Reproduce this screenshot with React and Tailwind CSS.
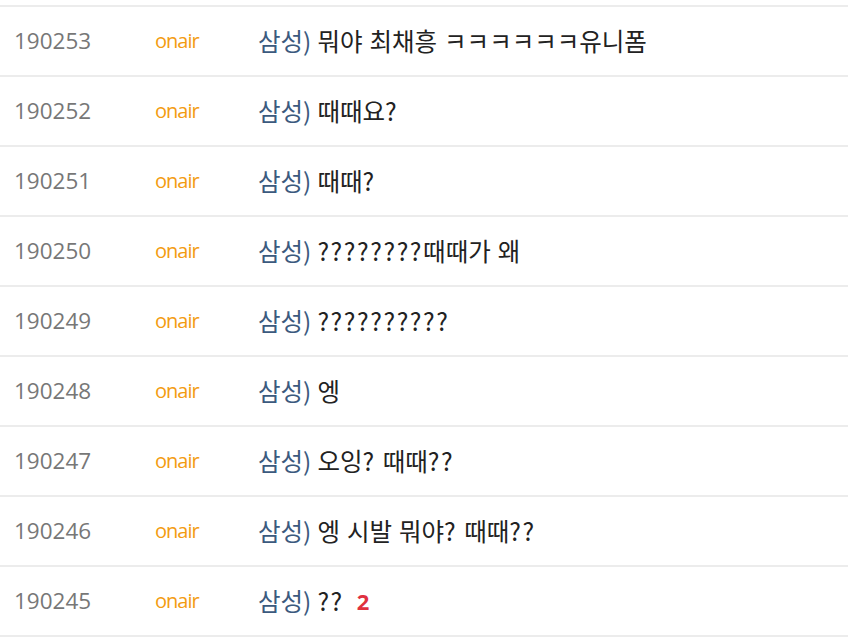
import React from "react";

const rows = [
  ["190253", "뭐야 최채흥 ㅋㅋㅋㅋㅋㅋ유니폼"],
  ["190252", "때때요?"],
  ["190251", "때때?"],
  ["190250", "????????때때가 왜"],
  ["190249", "??????????"],
  ["190248", "엥"],
  ["190247", "오잉? 때때??"],
  ["190246", "엥 시발 뭐야? 때때??"],
  ["190245", "??", 2],
];

function Msg({ text }) {
  const parts = text.split(/(\?+)/).filter(Boolean);
  return (
    <>
      {parts.map((p, i) =>
        p[0] === "?" ? (
          <span key={i} className="tracking-[1.6px]">
            {p}
          </span>
        ) : (
          <span key={i}>{p}</span>
        )
      )}
    </>
  );
}

export default function App() {
  return (
    <div
      className="w-[848px] h-[638px] bg-white overflow-hidden pt-[5px]"
      style={{ fontFamily: '"Open Sans", "Noto Sans CJK KR", sans-serif' }}
    >
      {rows.map(([id, msg, cnt], i) => (
        <div
          key={id}
          className={`flex items-center h-[70px] border-t-2 border-[#ececec] ${i === rows.length - 1 ? "border-b-2 h-[72px]" : ""}`}
        >
          <div className="w-[155px] pl-[14px] text-[22.5px] text-[#777777]">{id}</div>
          <div className="w-[103px] text-[20px] text-[#f39c12] tracking-[-1px]">onair</div>
          <div
            className="flex items-center text-[24.5px] text-[#222222] whitespace-pre [word-spacing:1.5px]"
            style={{ fontFamily: '"Noto Sans CJK KR", sans-serif' }}
          >
            <span className="text-[#3b5a7e]">삼성)</span>
            <span className="ml-[6px]">
              <Msg text={msg} />
            </span>
            {cnt ? (
              <span
                className="ml-[13px] text-[22px] leading-none font-bold text-[#e0313f]"
                style={{ fontFamily: '"Open Sans", sans-serif' }}
              >
                {cnt}
              </span>
            ) : null}
          </div>
        </div>
      ))}
    </div>
  );
}
